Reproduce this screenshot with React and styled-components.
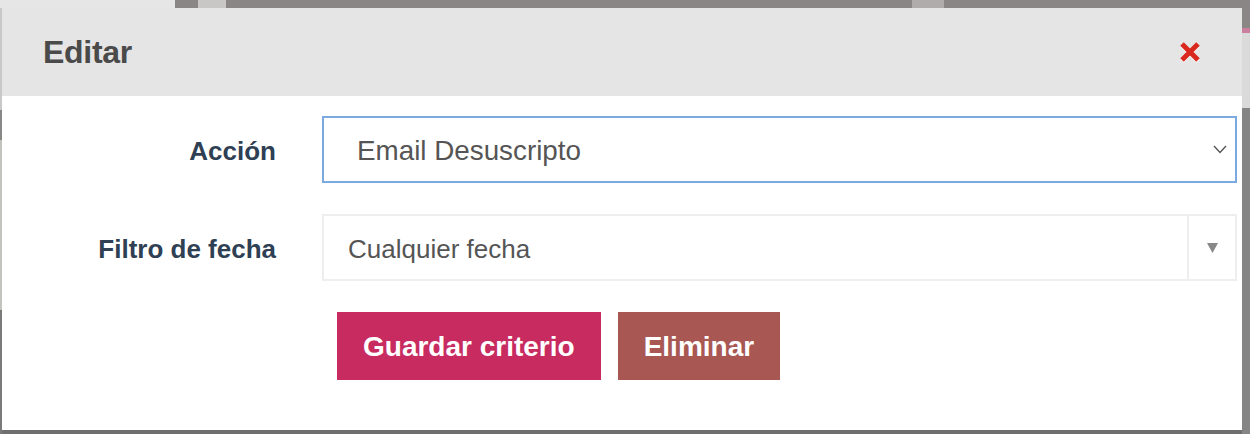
import styled, { createGlobalStyle } from 'styled-components';

const GlobalStyle = createGlobalStyle`
    html, body {
        margin: 0;
        padding: 0;
    }
    body {
        font-family: "Liberation Sans", Arial, sans-serif;
        background: #6f6f6f;
    }
`;

const Page = styled.div`
    width: 1250px;
    height: 434px;
    box-sizing: border-box;
    padding: 8px 8px 4px 2px;
    overflow: hidden;
    background:
        linear-gradient(to right, #e6e6e6 0 175px, #8b8686 175px 198px, #c9c6c6 198px 226px, #8b8686 226px 912px, #b0acac 912px 944px, #8b8686 944px) top left / 100% 8px no-repeat,
        linear-gradient(to bottom, #8b8686 0 28px, #c9809e 28px 33px, #dadada 33px 108px, #858585 108px) top right / 8px 100% no-repeat,
        linear-gradient(to bottom, #c8c8c8 0 110px, #888888 110px 140px, #c4c2bc 140px 310px, #7a7a7a 310px) top left / 2px 100% no-repeat,
        #6f6f6f;
`;

const Modal = styled.div`
    width: 1240px;
    height: 422px;
    background: #fff;
    display: flex;
    flex-direction: column;
`;

const Header = styled.div`
    height: 88px;
    background: #e5e5e5;
    display: flex;
    align-items: center;
    justify-content: space-between;
    padding: 0 40px 0 41px;
    box-sizing: border-box;
`;

const Title = styled.h2`
    margin: 0;
    font-size: 32px;
    font-weight: 700;
    color: #4a4a4a;
    letter-spacing: -0.3px;
`;

const CloseBtn = styled.button`
    border: none;
    background: none;
    padding: 0;
    width: 24px;
    height: 24px;
    display: flex;
    align-items: center;
    justify-content: center;
    cursor: pointer;
    filter: drop-shadow(0 1px 0 #fff);
`;

const Body = styled.div`
    padding: 20px 5px 0 0;
    display: grid;
    grid-template-columns: 274px 1fr;
    column-gap: 46px;
    row-gap: 31px;
    align-items: center;
`;

const Label = styled.label`
    text-align: right;
    font-size: 26px;
    font-weight: 700;
    color: #2f3f54;
    padding-top: 3px;
`;

const SelectBox = styled.div`
    height: 67px;
    box-sizing: border-box;
    border: 2px solid ${p => (p.$focused ? '#7caae0' : '#eeeeee')};
    display: flex;
    align-items: center;
    background: #fff;
    color: #555;
`;

const SelectText = styled.span`
    flex: 1;
    padding-left: ${p => p.$pad}px;
    padding-top: 3px;
    font-size: ${p => p.$size}px;
`;

const ChevronWrap = styled.span`
    width: 24px;
    display: flex;
    justify-content: center;
    margin-right: 3px;
`;

const CaretWrap = styled.span`
    width: 46px;
    align-self: stretch;
    border-left: 2px solid #eeeeee;
    display: flex;
    align-items: center;
    justify-content: center;
`;

const Actions = styled.div`
    grid-column: 2;
    display: flex;
    gap: 17px;
    padding-left: 15px;
`;

const Button = styled.button`
    height: 68px;
    border: none;
    padding: 2px 26px 0;
    background: ${p => p.$bg};
    color: #fff;
    font-family: "Liberation Sans", Arial, sans-serif;
    font-size: 28px;
    font-weight: 700;
    cursor: pointer;
`;

const App = () => (
    <>
        <GlobalStyle />
        <Page>
            <Modal>
                <Header>
                    <Title>Editar</Title>
                    <CloseBtn aria-label="Cerrar">
                        <svg width="22" height="22" viewBox="0 0 22 22">
                            <path d="M3 3 L19 19 M19 3 L3 19" stroke="#d9281e" strokeWidth="5" />
                        </svg>
                    </CloseBtn>
                </Header>
                <Body>
                    <Label>Acción</Label>
                    <SelectBox $focused>
                        <SelectText $pad={33} $size={27.8}>Email Desuscripto</SelectText>
                        <ChevronWrap>
                            <svg width="14" height="9" viewBox="0 0 14 9">
                                <path d="M1 1 L7 7.5 L13 1" fill="none" stroke="#555" strokeWidth="1.4" />
                            </svg>
                        </ChevronWrap>
                    </SelectBox>
                    <Label>Filtro de fecha</Label>
                    <SelectBox>
                        <SelectText $pad={24} $size={26}>Cualquier fecha</SelectText>
                        <CaretWrap>
                            <svg width="11" height="10" viewBox="0 0 11 10">
                                <path d="M0 0 H11 L5.5 10 Z" fill="#888" />
                            </svg>
                        </CaretWrap>
                    </SelectBox>
                    <Actions>
                        <Button $bg="#c82b60">Guardar criterio</Button>
                        <Button $bg="#a85752">Eliminar</Button>
                    </Actions>
                </Body>
            </Modal>
        </Page>
    </>
);

export default App;
